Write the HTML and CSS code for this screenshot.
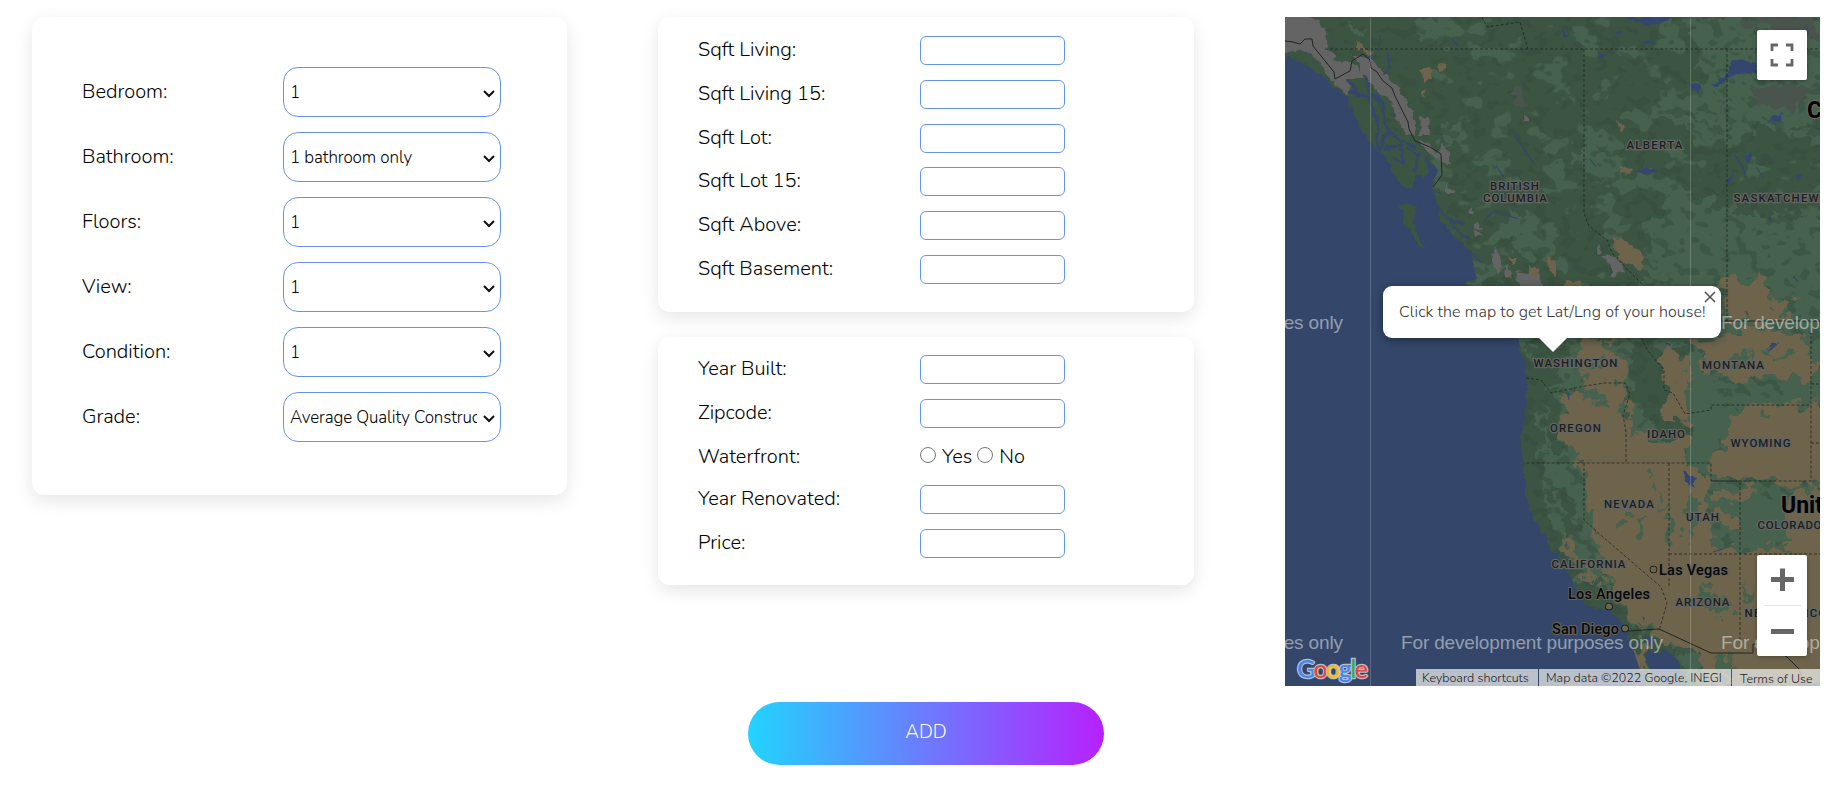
FILE: index.html
```html
<!DOCTYPE html>
<html lang="en">
<head>
<meta charset="utf-8">
<title>Add house</title>
<link rel="stylesheet" href="styles.css">
</head>
<body>
<form class="page">
  <div class="columns">
    <section class="card card-main">
      <div class="row"><label>Bedroom:</label><select><option>1</option></select></div>
      <div class="row"><label>Bathroom:</label><select><option>1 bathroom only</option></select></div>
      <div class="row"><label>Floors:</label><select><option>1</option></select></div>
      <div class="row"><label>View:</label><select><option>1</option></select></div>
      <div class="row"><label>Condition:</label><select><option>1</option></select></div>
      <div class="row"><label>Grade:</label><select><option>Average Quality Construction</option></select></div>
    </section>
    <div class="stack">
      <section class="card card-size">
        <div class="line"><label>Sqft Living:</label><input type="text"></div>
        <div class="line"><label>Sqft Living 15:</label><input type="text"></div>
        <div class="line"><label>Sqft Lot:</label><input type="text"></div>
        <div class="line"><label>Sqft Lot 15:</label><input type="text"></div>
        <div class="line"><label>Sqft Above:</label><input type="text"></div>
        <div class="line"><label>Sqft Basement:</label><input type="text"></div>
      </section>
      <section class="card card-year">
        <div class="line"><label>Year Built:</label><input type="text"></div>
        <div class="line"><label>Zipcode:</label><input type="text"></div>
        <div class="line line-radio"><label>Waterfront:</label><span class="choices"><input type="radio" name="w"><span class="yes">Yes</span><input type="radio" name="w"><span>No</span></span></div>
        <div class="line"><label>Year Renovated:</label><input type="text"></div>
        <div class="line"><label>Price:</label><input type="text"></div>
      </section>
    </div>
    <section class="map">
      <svg class="terrain" width="535" height="669" viewBox="0 0 535 669">
        <defs>
          <filter id="rough" x="-5%" y="-5%" width="110%" height="110%" color-interpolation-filters="sRGB"><feTurbulence type="fractalNoise" baseFrequency=".07" numOctaves="3" seed="4"/><feDisplacementMap in="SourceGraphic" scale="30" xChannelSelector="R" yChannelSelector="G"/></filter>
          <filter id="coast" x="-5%" y="-5%" width="110%" height="110%" color-interpolation-filters="sRGB"><feTurbulence type="fractalNoise" baseFrequency=".12" numOctaves="2" seed="8"/><feDisplacementMap in="SourceGraphic" scale="8" xChannelSelector="R" yChannelSelector="G"/></filter>
          <filter id="speckle" x="0" y="0" width="100%" height="100%" color-interpolation-filters="sRGB"><feTurbulence type="fractalNoise" baseFrequency=".035 .045" numOctaves="3" seed="12"/><feColorMatrix values="0 0 0 0 .275  0 0 0 0 .385  0 0 0 0 .31  18 0 0 0 -10.4"/></filter>
          <filter id="shade" x="0" y="0" width="100%" height="100%" color-interpolation-filters="sRGB"><feTurbulence type="fractalNoise" baseFrequency=".08 .1" numOctaves="2" seed="31"/><feColorMatrix values="0 0 0 0 .22  0 0 0 0 .31  0 0 0 0 .25  0 14 0 0 -8"/></filter>
          <clipPath id="land"><path d="M0 0H535V669H398L395 645 383 633 375 637 365 633 360 645 373 669H364L354 650 343 616 337 605 325 592 302 590 288 566 273 540 264 533V523L257 516 247 500 246 488 237 476 241 465 235 428 240 403 242 370 241 350 233 321 220 300 196 281 180 266 192 262 189 248 184 233 170 220 153 200 151 185 148 168 153 153 147 145 141 140 126 120 110 115 98 100 90 84 76 75 64 80 50 71 32 56 18 45 0 39Z"/></clipPath>
        </defs>
        <rect class="sea" width="535" height="669"/>
        <g filter="url(#coast)">
          <path class="forest" d="M0-9H550V680H398L395 645 383 633 375 637 365 633 360 645 376 680H366L354 650 343 616 337 605 325 592 302 590 288 566 273 540 264 533V523L257 516 247 500 246 488 237 476 241 465 235 428 240 403 242 370 241 350 233 321 220 300 196 281 180 266 192 262 189 248 184 233 170 220 153 200 151 185 148 168 153 153 147 145 141 160 131 158 128 171 117 170 108 155 101 140 92 135 87 130 76 112 65 88 64 80 50 71 32 56 18 45-9 39Z"/>
          <path class="forest" d="M113 186L132 188 129 204 130 214 142 231 131 225 120 207Z"/>
          <path class="inlet" d="M62 61L74 78 84 80 93 108 92 132M80 50L84 75 98 88 101 112 118 125 132 130M98 133L116 127 119 147M124 132L132 139 131 156M92 60L84 38M92 135L104 112M119 147L108 140M141 140L147 165M65 74L80 80"/>
          <path class="inlet thin" d="M150 190L164 202 172 214 184 222M165 202L180 208M184 233L196 245 189 252M189 262L204 262M232 322L252 332 262 326 263 338"/>
        </g>
        <g clip-path="url(#land)">
          <rect x="145" width="390" height="345" filter="url(#speckle)"/>
          <g class="light" filter="url(#rough)">
            <path d="M405 0H545V90L510 115 480 108 440 130 420 100 360 105 380 80 420 70Z"/>
            <path d="M390 170L440 190 475 200 545 202V310H375L355 245 368 210Z"/>
            <path d="M282 131L330 135 345 148 330 168 303 160Z"/>
            <path d="M220 190L250 195 262 222 255 245 235 240 222 222Z"/>
            <path d="M285 322L350 322 345 375 370 410 408 440 545 435V669H410L385 625 345 610 330 580 295 560 262 500 254 390Z"/>
            <path d="M410 300H545V460H400Z"/>
            <path d="M60 10L80 14 72 24ZM130 0L170 8 158 25 138 18ZM155 110L178 105 173 126 159 130Z"/>
          </g>
          <g class="dark" filter="url(#rough)">
            <path d="M350 321L378 348 365 372 352 365ZM275 365L280 440 262 430 258 380ZM240 322L265 332 275 360 250 372ZM265 466L285 485 297 520 280 522ZM412 372L424 398 414 412Z"/>
          </g>
          <rect width="535" height="669" filter="url(#shade)" opacity=".6"/>
          <g class="tan" filter="url(#rough)">
            <path d="M440 262L480 262 482 285 510 282 500 298 470 305 434 296Z"/>
            <path d="M408 322L438 318 475 308 520 325 530 352 520 365 490 356 455 368 420 350Z"/>
            <path d="M295 325L327 328 343 358 330 370 348 377 338 402 365 423 407 420 400 450 345 448 294 444 280 420 280 380 300 372Z"/>
            <path d="M382 322L402 342 415 374 408 410 374 398 386 372 372 348Z"/>
            <path d="M450 398L468 387 518 386 545 382V470L430 462 421 445 440 430Z"/>
            <path d="M300 445H410L422 466 425 530 447 535 480 525 500 540 545 525V669H424L411 637 380 624 345 606 326 565 304 500Z"/>
            <path d="M430 478L473 472 475 487 462 495 457 515 430 502Z"/>
            <path d="M270 514L286 525 310 566 300 560ZM315 551L323 566 317 571Z"/>
            <path d="M344 618L358 630 365 660 379 669 369 669 347 637Z"/>
            <path d="M515 472L545 474V540L502 535 494 510Z"/>
          </g>
          <g class="tan" filter="url(#coast)"><path d="M72 23L78 31 87 36 84 40 77 34 72 32ZM136 52L144 52 148 60 139 66ZM153 45L158 47 161 55 154 56ZM136 72L141 73 138 80ZM332 104L339 108 335 116ZM335 150L346 152 343 158 335 156ZM328 218L348 228 359 242 357 252 334 244ZM260 238L270 244 272 260 263 252ZM243 247L254 252 255 262 244 260ZM223 240L232 240 229 246ZM280 263L297 264 296 273 280 276ZM418 285L428 270 431 277ZM474 254L477 262 472 266Z"/></g>
          <g class="green" filter="url(#rough)">
            <path d="M401 335L420 350 440 380 450 401 430 435 410 455 404 420Z"/>
            <path d="M426 480L455 485 475 470 500 485 505 520 475 535 455 510Z"/>
            <path d="M410 563L440 580 450 600 425 592ZM455 565L470 578 460 583ZM430 640L448 645 440 669ZM336 495L345 503 333 513ZM362 495L357 520 350 512ZM378 480L387 500 392 530 382 530ZM406 470L415 480 407 530 400 510ZM486 395L478 390 482 405ZM500 365L545 355V386L490 380Z"/>
            <path d="M290 372L315 378 322 388 308 386ZM345 402L355 412 350 422ZM300 350L325 342 316 352ZM440 345L470 335 452 350ZM480 338L510 330 498 342ZM365 455L372 470 366 480Z"/>
          </g>
          <g class="snow" filter="url(#coast)">
            <path d="M-5-5L29 0 41 15 43 33 51 38 48 44 64 45 81 55 77 62 63 62 64 79 50 68 42 58 30 42 18 33-5 38Z"/>
            <path d="M68 38L84 42 98 53 108 66 121 83 130 103 130 118 121 117 110 98 105 79 94 77 82 61ZM135 100L142 101 145 118 134 118ZM134 122L145 128 152 137 159 124 165 147 153 142 136 129ZM162 165L169 176 162 176ZM185 188L188 196 183 196ZM191 204L198 213 188 211ZM190 212L197 219 195 221 189 219ZM210 230L218 248 212 259 207 243ZM222 248L227 260 220 258ZM230 255L255 259 256 271 235 272ZM239 99L243 99 243 105 238 105ZM316 238L330 238 341 255 333 256 325 247ZM312 226L317 236 312 237ZM326 243L332 256 326 260Z"/>
          </g>
          <path class="haze" d="M458 0H535V20L502 18 470 8ZM460 71L480 65 525 70 510 92 488 96 475 88ZM218 70L235 76 242 92 225 84ZM430 73L442 83 430 91Z" filter="url(#rough)"/>
          <g class="lake" filter="url(#coast)"><path d="M340 0H389L375 6 362 8ZM427 68L437 62 451 43 472 46 471 55 451 57 432 70ZM405 68L413 65 416 70 411 77ZM331 14L338 15 332 18ZM358 24L368 24 361 28ZM311 37L320 39 316 42ZM485 100L496 96 495 104 482 105ZM508 160L518 157 513 165ZM350 153L368 151 373 155 359 156ZM366 142L370 144ZM457 138L467 135 465 145ZM398 454L403 454 411 470 404 468ZM356 599L361 602 360 606ZM360 617L369 622 366 630ZM402 463L410 463 408 470ZM518 5L523 15 530 8 522 17ZM280 12L283 20 278 18ZM380 325L384 328 383 331ZM485 330L492 325 490 330 481 334ZM483 448L490 458ZM435 396L438 400ZM440 165L449 157 446 166Z"/></g>
          <path class="river" d="M94 34L95 18M103 35L104 53 98 58M167 22L173 29M229 117L249 147M211 148L219 161M199 203L209 194 233 202M305 142L311 150M450 138L458 150 461 160M471 150L478 160M485 200L486 205M508 259L513 265M283 375L284 383M428 535L438 532"/>
        </g>
        <g class="border">
          <path d="M0 24L8 25 15 27 20 22 27 22 28 29 49 55 50 62 65 54 67 44 78 37 85 43 86 51 92 55 98 64 107 71 110 79 123 105 124 112 130 124 145 130 156 137 157 158 148 170"/>
          <path d="M343 614L374 612 426 636H468V627H480L502 640 514 652 520 669M437 304H535"/>
          <path class="dash" d="M40 32H535M299 32V196L304 209 322 223 327 236 340 250 366 276 372 288M442 32V304M197 0L202 10 235 5 243 32"/>
          <path class="dash" d="M241 361L256 363 266 376 300 369 320 366H340L345 377 338 398 341 415V446M356 321L363 334 379 353V373L388 376 400 397 426 393V388H526V464H426V446H239M299 446V503L318 520 376 570 382 586 374 614M384 446V570M426 464H455V626M384 537H535M526 304V388M526 367H535M526 426H535"/>
        </g>
        <path class="tile" d="M85.500 0V669M405.500 0V669"/>
        <g class="state">
          <text x="205" y="173" textLength="49">BRITISH</text><text x="198" y="185" textLength="64">COLUMBIA</text>
          <text x="341.500" y="132" textLength="56">ALBERTA</text><text x="448.500" y="185" textLength="103">SASKATCHEWAN</text>
          <text x="248.500" y="350" textLength="84">WASHINGTON</text><text x="417" y="352" textLength="62">MONTANA</text>
          <text x="265" y="415" textLength="51">OREGON</text><text x="362" y="421" textLength="38">IDAHO</text><text x="445.500" y="430" textLength="60">WYOMING</text>
          <text x="319" y="491" textLength="50">NEVADA</text><text x="401" y="504" textLength="33">UTAH</text><text x="472.500" y="512" textLength="64">COLORADO</text>
          <text x="266.500" y="551" textLength="74">CALIFORNIA</text><text x="390.500" y="589" textLength="54">ARIZONA</text><text x="459.500" y="600" textLength="82">NEW MEXICO</text>
        </g>
        <g class="city"><text x="374" y="558" textLength="69">Las Vegas</text><text x="283" y="582" textLength="82">Los Angeles</text><text x="267" y="617" textLength="67">San Diego</text>
          <circle cx="368.500" cy="552.500" r="3"/><circle cx="324" cy="589.500" r="3"/><circle cx="340" cy="611.500" r="3"/></g>
        <g class="country"><text x="522" y="101">Canada</text><text x="496" y="496">United States</text></g>
        <g class="mark"><text x="-204" y="312" textLength="262">For development purposes only</text><text x="436" y="312" textLength="262">For development purposes only</text><text x="-204" y="632" textLength="262">For development purposes only</text><text x="116" y="632" textLength="262">For development purposes only</text><text x="436" y="632" textLength="262">For development purposes only</text></g>
        <text class="logo" x="12" y="661" textLength="71"><tspan fill="#4285f4">G</tspan><tspan fill="#ea4335">o</tspan><tspan fill="#fbbc05">o</tspan><tspan fill="#4285f4">g</tspan><tspan fill="#34a853">l</tspan><tspan fill="#ea4335">e</tspan></text>
      </svg>
      <div class="popup"><span>Click the map to get Lat/Lng of your house!</span><svg class="close" width="12" height="12" viewBox="0 0 12 12"><path d="M1 1L11 11M11 1L1 11"/></svg></div>
      <div class="control full"><svg width="24" height="24" viewBox="0 0 24 24"><path d="M2 8V2H8M16 2H22V8M22 16V22H16M8 22H2V16"/></svg></div>
      <div class="control zoom"><svg width="50" height="101" viewBox="0 0 50 101"><path class="bar" d="M14 24.500H37M25.500 13.500V36M14 76.500H37"/><path class="rule" d="M7 50.500H44"/></svg></div>
      <div class="legal"><span class="keys">Keyboard shortcuts</span><span class="data">Map data ©2022 Google, INEGI</span><span class="terms">Terms of Use</span></div>
    </section>
  </div>
  <button class="add" type="button">ADD</button>
</form>
</body>
</html>
```
FILE: styles.css
```css
* { box-sizing: border-box; }
body { margin: 0; background: #fff; color: #000; font: 350 20px/27px Nunito, Lato, sans-serif; overflow: hidden; }
.page { height: 790px; padding: 17px 27px 0 32px; display: flex; flex-direction: column; align-items: center; }
.columns { width: 1788px; height: 685px; display: grid; grid-template-columns: 535px 536px 535px; column-gap: 91px; align-items: start; }
.card { border-radius: 12px; background: #fff; box-shadow: 0 6px 18px rgba(0,0,0,.1); }
.card-main { height: 478px; padding: 50px 66px 0 50px; display: flex; flex-direction: column; gap: 15px; }
.row { display: flex; justify-content: space-between; align-items: center; height: 50px; }
.row label { padding-bottom: 2px; }
select { appearance: none; width: 218px; height: 50px; padding: 0 23px 0 6px; border: 1px solid #6495ed; border-radius: 15px; background: #fff url("data:image/svg+xml,%3Csvg xmlns='http://www.w3.org/2000/svg' width='12' height='8'%3E%3Cpath d='M1 1L6 6 11 1' fill='none' stroke='%23111' stroke-width='2'/%3E%3C/svg%3E") no-repeat right 5px top 22px; color: #000; font: 350 17px Nunito, Lato, sans-serif; letter-spacing: -.1px; text-overflow: clip; }
.stack { display: flex; flex-direction: column; gap: 25px; }
.card-size { height: 295px; padding: 19px 40px 0; }
.card-year { height: 248px; padding: 18px 40px 0; }
.line { display: grid; grid-template-columns: 222px 1fr; height: 43.800px; align-items: start; }
.line-radio { height: 42.500px; }
input[type=text] { width: 145px; height: 29px; border: 1px solid #6495ed; border-radius: 6px; background: #fff; }
.choices { display: flex; }
.choices input { width: 16px; height: 16px; margin: 4px 6px 0 0; }
.yes { margin-right: 5px; }
.add { width: 356px; height: 63px; border: 0; border-radius: 32px; background: linear-gradient(90deg, #21d4fd, #b721ff); color: #fff; font: 350 19px Nunito, Lato, sans-serif; padding: 0 0 3px; }
.map { position: relative; width: 535px; height: 669px; overflow: hidden; }
.terrain { display: block; font-family: Roboto, sans-serif; }
.sea { fill: #34476a; }
.forest, .dark { fill: #3c5442; }
.inlet { fill: none; stroke: #34476a; stroke-width: 3; }
.thin { stroke-width: 2; }
.light, .green { fill: #46624e; }
.tan { fill: #6e644c; }
.snow { fill: #646464; }
.haze { fill: #49544d; }
.lake { fill: #324670; }
.river { fill: none; stroke: #324670; stroke-width: 1.200; }
.border { fill: none; stroke: #202622; stroke-width: 1; }
.dash { stroke-dasharray: 3 2; opacity: .8; }
.tile { stroke: rgba(255,255,255,.2); stroke-width: 1; }
.mark { font: 19px "Liberation Sans", Arial, sans-serif; fill: rgba(255,255,255,.48); }
.state { font-size: 11.500px; font-weight: 500; fill: #1e2020; stroke: #626562; stroke-width: 2.500px; paint-order: stroke; }
.city { font-size: 14.500px; font-weight: 500; fill: #080808; stroke: #626258; stroke-width: 2px; paint-order: stroke; }
.city circle { fill: #6e644c; stroke: #111; stroke-width: 1.500px; }
.country { font-size: 23px; font-weight: 700; fill: #000; stroke: #626562; stroke-width: 2.500px; paint-order: stroke; }
.logo { font: 500 25px Lato, sans-serif; stroke: #b8bfcb; stroke-width: 2.500px; paint-order: stroke; }
.popup { position: absolute; left: 98px; top: 269px; width: 338px; height: 52px; padding: 14px 0 0 16px; border-radius: 9px; background: #fff; color: #333; font: 300 16px/24px Nunito, Lato, sans-serif; letter-spacing: .1px; white-space: nowrap; box-shadow: 0 2px 8px rgba(0,0,0,.4); }
.popup::after { content: ""; position: absolute; left: 156px; top: 52px; border: 14px solid transparent; border-top-color: #fff; border-bottom: 0; }
.close { position: absolute; right: 5px; top: 5px; fill: none; stroke: #555; stroke-width: 1.600; }
.control { position: absolute; left: 472px; width: 50px; background: #fff; border-radius: 2px; box-shadow: 0 1px 4px rgba(0,0,0,.3); fill: none; stroke: #666; }
.full { top: 13px; height: 50px; display: grid; place-items: center; stroke-width: 2.800; }
.zoom { top: 538px; height: 101px; }
.zoom svg { display: block; }
.bar { stroke-width: 5; }
.rule { stroke: #e6e6e6; stroke-width: 1; }
.legal { position: absolute; right: 0; bottom: 0; display: flex; gap: 1px; height: 17px; color: #222; font: 350 12.500px/17px Nunito, Lato, sans-serif; white-space: nowrap; }
.legal span { background: rgba(245,245,245,.7); }
.keys { width: 122px; padding-left: 6px; }
.data { width: 192px; padding-left: 7px; }
.terms { width: 88px; padding: 2px 0 0 8px; line-height: 15px; }
```
